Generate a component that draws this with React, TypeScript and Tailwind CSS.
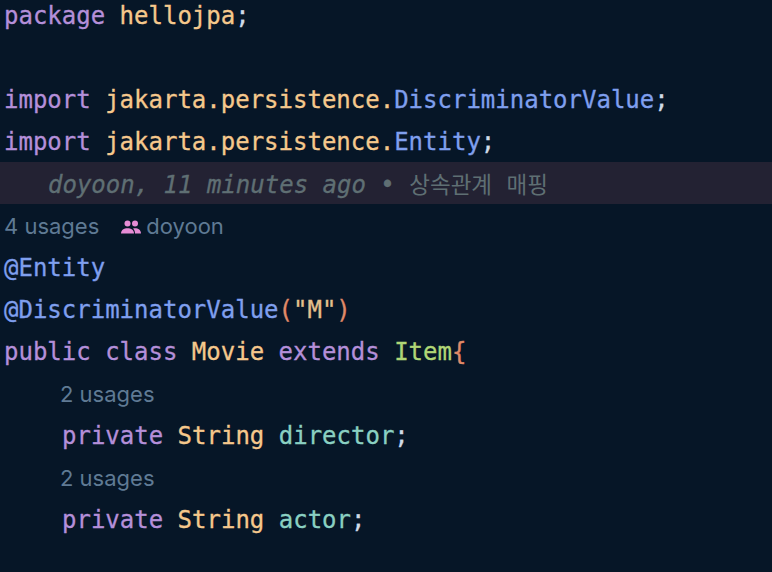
import React from 'react';

const purple = 'text-[#b48fd9]';
const orange = 'text-[#f5c88c]';
const punct = 'text-[#d0dbe8]';
const teal = 'text-[#8ad0c2]';
const blue = 'text-[#7f9fee]';
const brace = 'text-[#e08a68]';

const Line = ({ children, indent = false }: { children?: React.ReactNode; indent?: boolean }) => (
  <div
    className={`h-[42px] whitespace-pre leading-[42px] [-webkit-text-stroke:0.3px] ${indent ? 'pl-[62px]' : 'pl-[4px]'}`}
  >
    {children}
  </div>
);

const Hint = ({ children, indent = false }: { children: React.ReactNode; indent?: boolean }) => (
  <div
    className={`flex h-[42px] items-center whitespace-pre pt-[1px] font-['Inter',sans-serif] text-[22px] text-[#5f7a94] ${indent ? 'pl-[60px]' : 'pl-[4px]'}`}
  >
    {children}
  </div>
);

const PeopleIcon = () => (
  <svg width="20" height="14" viewBox="0 0 20 14" className="ml-[22px] mr-[5px]" fill="#e68cd5">
    <circle cx="6.5" cy="3.6" r="3" />
    <circle cx="14" cy="3.6" r="3" />
    <path d="M0 13.5c0-3.4 3-5.2 6.5-5.2s6.5 1.8 6.5 5.2z" />
    <path d="M14 13.5c0-2-.7-3.8-2-5 .7-.2 1.4-.2 2-.2 3.2 0 6 1.8 6 5.2z" />
  </svg>
);

export default function App() {
  return (
    <div className="h-[572px] w-[772px] overflow-hidden bg-[#061627] font-['DejaVu_Sans_Mono',monospace] text-[24px]">
      <div className="-mt-[5px]">
        <Line>
          <span className={purple}>package </span>
          <span className={orange}>hellojpa</span>
          <span className={punct}>;</span>
        </Line>
        <Line />
        <Line>
          <span className={purple}>import </span>
          <span className={orange}>jakarta.persistence.</span>
          <span className={blue}>DiscriminatorValue</span>
          <span className={punct}>;</span>
        </Line>
        <Line>
          <span className={purple}>import </span>
          <span className={orange}>jakarta.persistence.</span>
          <span className={blue}>Entity</span>
          <span className={punct}>;</span>
        </Line>
        <div className="-mt-[1px] mb-[1px] h-[42px] whitespace-pre bg-[#232233] pl-[48px] leading-[43px] text-[#5f6f73] [-webkit-text-stroke:0.3px]">
          <span className="italic">doyoon, 11 minutes ago</span>
          <span> • </span>
          <span className="font-['Noto_Sans_CJK_KR',sans-serif] text-[22.5px] [-webkit-text-stroke:0px]">상속관계</span>
          <span> </span>
          <span className="font-['Noto_Sans_CJK_KR',sans-serif] text-[22.5px] [-webkit-text-stroke:0px]">매핑</span>
        </div>
        <Hint>
          4 usages
          <PeopleIcon />
          doyoon
        </Hint>
        <Line>
          <span className={blue}>@Entity</span>
        </Line>
        <Line>
          <span className={blue}>@DiscriminatorValue</span>
          <span className={brace}>(</span>
          <span className="text-[#e3c08c]">"M"</span>
          <span className={brace}>)</span>
        </Line>
        <Line>
          <span className={purple}>public class </span>
          <span className={orange}>Movie </span>
          <span className={purple}>extends </span>
          <span className="text-[#b0d676]">Item</span>
          <span className={brace}>{'{'}</span>
        </Line>
        <Hint indent>2 usages</Hint>
        <Line indent>
          <span className={purple}>private </span>
          <span className={orange}>String </span>
          <span className={teal}>director</span>
          <span className={punct}>;</span>
        </Line>
        <Hint indent>2 usages</Hint>
        <Line indent>
          <span className={purple}>private </span>
          <span className={orange}>String </span>
          <span className={teal}>actor</span>
          <span className={punct}>;</span>
        </Line>
      </div>
    </div>
  );
}
